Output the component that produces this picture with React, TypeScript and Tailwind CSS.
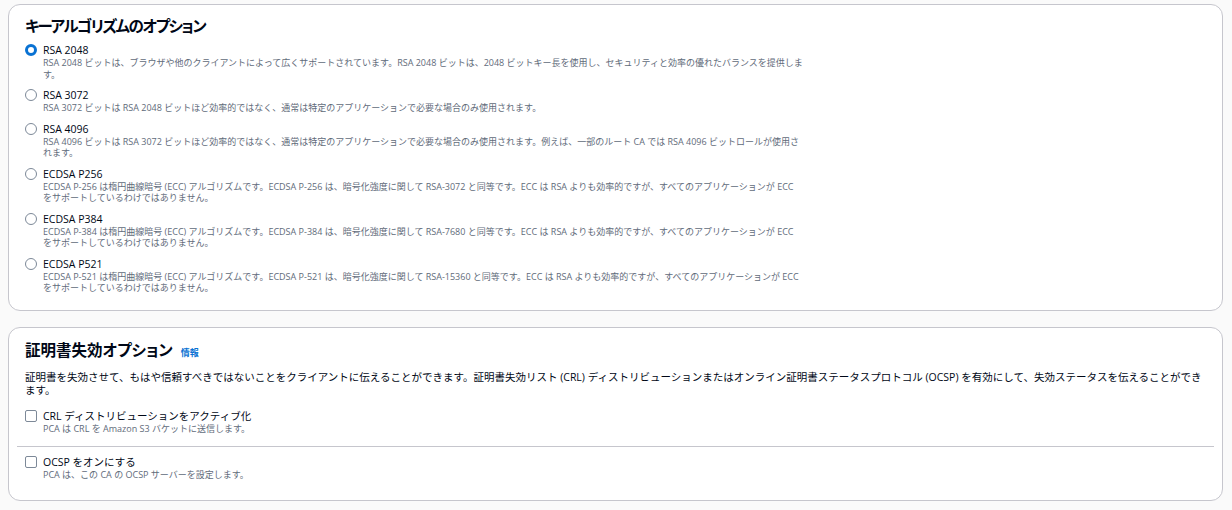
import React, { useState } from 'react';

const font = { fontFamily: '"Open Sans", "Noto Sans CJK JP", sans-serif' };

const algorithms = [
  {
    id: 'rsa2048',
    label: 'RSA 2048',
    desc: 'RSA 2048 ビットは、ブラウザや他のクライアントによって広くサポートされています。RSA 2048 ビットは、2048 ビットキー長を使用し、セキュリティと効率の優れたバランスを提供します。',
  },
  {
    id: 'rsa3072',
    label: 'RSA 3072',
    desc: 'RSA 3072 ビットは RSA 2048 ビットほど効率的ではなく、通常は特定のアプリケーションで必要な場合のみ使用されます。',
  },
  {
    id: 'rsa4096',
    label: 'RSA 4096',
    desc: 'RSA 4096 ビットは RSA 3072 ビットほど効率的ではなく、通常は特定のアプリケーションで必要な場合のみ使用されます。例えば、一部のルート CA では RSA 4096 ビットロールが使用されます。',
  },
  {
    id: 'p256',
    label: 'ECDSA P256',
    desc: 'ECDSA P-256 は楕円曲線暗号 (ECC) アルゴリズムです。ECDSA P-256 は、暗号化強度に関して RSA-3072 と同等です。ECC は RSA よりも効率的ですが、すべてのアプリケーションが ECC をサポートしているわけではありません。',
  },
  {
    id: 'p384',
    label: 'ECDSA P384',
    desc: 'ECDSA P-384 は楕円曲線暗号 (ECC) アルゴリズムです。ECDSA P-384 は、暗号化強度に関して RSA-7680 と同等です。ECC は RSA よりも効率的ですが、すべてのアプリケーションが ECC をサポートしているわけではありません。',
  },
  {
    id: 'p521',
    label: 'ECDSA P521',
    desc: 'ECDSA P-521 は楕円曲線暗号 (ECC) アルゴリズムです。ECDSA P-521 は、暗号化強度に関して RSA-15360 と同等です。ECC は RSA よりも効率的ですが、すべてのアプリケーションが ECC をサポートしているわけではありません。',
  },
];

const Radio: React.FC<{ checked: boolean }> = ({ checked }) =>
  checked ? (
    <span className="w-3 h-3 rounded-full border-[3.5px] border-[#0972d3] bg-white shrink-0" />
  ) : (
    <span className="w-3 h-3 rounded-full border border-[#7d8998] bg-white shrink-0" />
  );

const Checkbox: React.FC = () => (
  <span className="w-3 h-3 rounded-[2px] border border-[#7d8998] bg-white shrink-0" />
);

export default function App() {
  const [algo, setAlgo] = useState('rsa2048');

  return (
    <div className="min-h-[510px] bg-[#fafafa] pl-2 pr-[9px] pt-1 pb-2 flex flex-col gap-4 text-[#000716]" style={font}>
      <section className="bg-white border border-[#c6c6cd] rounded-[12px] px-4 pt-[10px] pb-4">
        <h2 className="text-[15.5px] leading-[22px] font-bold tracking-[-1.5px] [font-feature-settings:'palt']">キーアルゴリズムのオプション</h2>
        <div className="mt-[6px] flex flex-col gap-2">
          {algorithms.map(a => (
            <div key={a.id} className="cursor-pointer" onClick={() => setAlgo(a.id)}>
              <div className="flex items-center gap-[6px] h-[14px]">
                <Radio checked={algo === a.id} />
                <span className="text-[10.5px] leading-[14px]">{a.label}</span>
              </div>
              <p className="pl-[18px] max-w-[779px] text-[9px] leading-[11.5px] text-[#5f6b7a]">{a.desc}</p>
            </div>
          ))}
        </div>
      </section>

      <section className="bg-white border border-[#c6c6cd] rounded-[12px] px-4 pt-[11px] pb-[19px]">
        <div className="flex items-baseline gap-2">
          <h2 className="text-[15.5px] leading-[22px] font-bold [font-feature-settings:'palt']">証明書失効オプション</h2>
          <a className="text-[9px] font-bold text-[#0972d3]">情報</a>
        </div>
        <p className="mt-[10px] text-[10.5px] leading-[13px]">
          証明書を失効させて、もはや信頼すべきではないことをクライアントに伝えることができます。証明書失効リスト (CRL) ディストリビューションまたはオンライン証明書ステータスプロトコル (OCSP) を有効にして、失効ステータスを伝えることができます。
        </p>
        <div className="mt-3">
          <div className="flex items-center gap-[6px] h-[14px]">
            <Checkbox />
            <span className="text-[10.5px] leading-[14px]">CRL ディストリビューションをアクティブ化</span>
          </div>
          <p className="pl-[18px] text-[9px] leading-[11.5px] text-[#5f6b7a]">PCA は CRL を Amazon S3 バケットに送信します。</p>
        </div>
        <div className="-mx-2 mt-3 mb-2 border-t border-[#c6c6cd]" />
        <div>
          <div className="flex items-center gap-[6px] h-[14px]">
            <Checkbox />
            <span className="text-[10.5px] leading-[14px]">OCSP をオンにする</span>
          </div>
          <p className="pl-[18px] text-[9px] leading-[11.5px] text-[#5f6b7a]">PCA は、この CA の OCSP サーバーを設定します。</p>
        </div>
      </section>
    </div>
  );
}
